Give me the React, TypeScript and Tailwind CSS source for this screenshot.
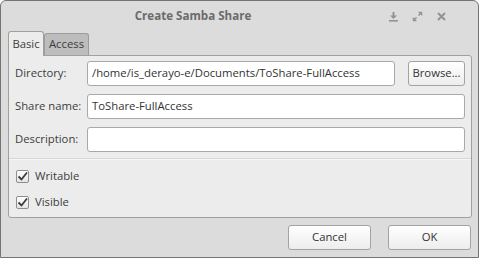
import React from 'react';

function TitleIcon({ kind }: { kind: 'min' | 'max' | 'close' }): React.JSX.Element {
  return (
    <svg width="11" height="11" viewBox="0 0 11 11" className="text-[#939393]">
      {kind === 'min' && (
        <g fill="currentColor">
          <rect x="4.5" y="1" width="2" height="4" />
          <path d="M2 4.5h7L5.5 8z" />
          <rect x="1" y="9" width="9" height="1.6" />
        </g>
      )}
      {kind === 'max' && (
        <g fill="currentColor" stroke="currentColor">
          <path d="M6.5 1h3.5v3.5z" strokeWidth="0.5" />
          <path d="M1 6.5v3.5h3.5z" strokeWidth="0.5" />
          <path d="M8.5 2.5L6.5 4.5M2.5 8.5l2-2" strokeWidth="1.6" fill="none" />
        </g>
      )}
      {kind === 'close' && (
        <path d="M2 2l7 7M9 2l-7 7" stroke="currentColor" strokeWidth="2" fill="none" />
      )}
    </svg>
  );
}

function Checkbox({ label }: { label: string }): React.JSX.Element {
  return (
    <div className="flex h-[26px] items-center gap-[6px] pl-[7px]">
      <span className="flex h-[13px] w-[13px] items-center justify-center rounded-[2px] border border-[#8e8e8e] bg-gradient-to-b from-white to-[#e4e4e4]">
        <svg width="11" height="11" viewBox="0 0 11 11">
          <path d="M1.5 5.5l3 3L10 1.5" stroke="#3a3a3a" strokeWidth="1.8" fill="none" />
        </svg>
      </span>
      <span>{label}</span>
    </div>
  );
}

function Field({ label, value, children }: { label: string; value: string; children?: React.ReactNode }): React.JSX.Element {
  return (
    <div className="flex h-[25px] items-center">
      <span className="w-[72px] shrink-0">{label}</span>
      <div className="flex h-full flex-1 items-center rounded-[3px] border border-[#a9a9a9] bg-white px-[4px] text-[#333]">
        {value}
      </div>
      {children}
    </div>
  );
}

function Button({ label, className }: { label: string; className: string }): React.JSX.Element {
  return (
    <div
      className={`flex h-[25px] items-center justify-center rounded-[3px] border border-[#a3a3a3] bg-gradient-to-b from-white to-[#ededed] text-[#333] ${className}`}
    >
      {label}
    </div>
  );
}

export default function App(): React.JSX.Element {
  return (
    <div className="flex h-[258px] w-[479px] flex-col overflow-hidden rounded-t-[6px] border border-[#747474] bg-[#dcdcdc] font-['Open_Sans',sans-serif] text-[11.3px] text-[#3c3c3c]">
      <div className="flex h-[30px] items-center">
        <div className="flex-1 text-center text-[11.6px] font-bold text-[#6b6b6b]">Create Samba Share</div>
        <div className="flex w-[93px] items-center gap-[13px] pl-[3px]">
          <TitleIcon kind="min" />
          <TitleIcon kind="max" />
          <TitleIcon kind="close" />
        </div>
      </div>

      <div className="ml-[7px] flex h-[24px] items-end">
        <div className="relative z-10 -mb-px flex h-[25px] w-[36px] items-center justify-center rounded-t-[3px] border border-b-0 border-[#a0a0a0] bg-[#ececec] pt-[1px]">
          Basic
        </div>
        <div className="flex h-[22px] w-[45px] items-center justify-center rounded-t-[3px] border border-b-0 border-[#9c9c9c] bg-[#bdbdbd]">
          Access
        </div>
      </div>

      <div className="ml-[7px] flex h-[163px] w-[464px] flex-col rounded-[3px] rounded-tl-none border border-[#a0a0a0] bg-[#ececec]">
        <div className="flex flex-col gap-[8px] px-[6px] pt-[5px]">
          <Field label="Directory:" value="/home/is_derayo-e/Documents/ToShare-FullAccess">
            <Button label="Browse..." className="ml-[13px] w-[57px]" />
          </Field>
          <Field label="Share name:" value="ToShare-FullAccess" />
          <Field label="Description:" value="" />
        </div>
        <div className="mt-[6px] h-[2px] border-t border-[#d6d6d6] bg-[#f6f6f6]" />
        <div className="pt-[3px]">
          <Checkbox label="Writable" />
          <Checkbox label="Visible" />
        </div>
      </div>

      <div className="flex justify-end gap-[17px] pr-[7px] pt-[7px]">
        <Button label="Cancel" className="w-[83px]" />
        <Button label="OK" className="w-[83px]" />
      </div>
    </div>
  );
}
